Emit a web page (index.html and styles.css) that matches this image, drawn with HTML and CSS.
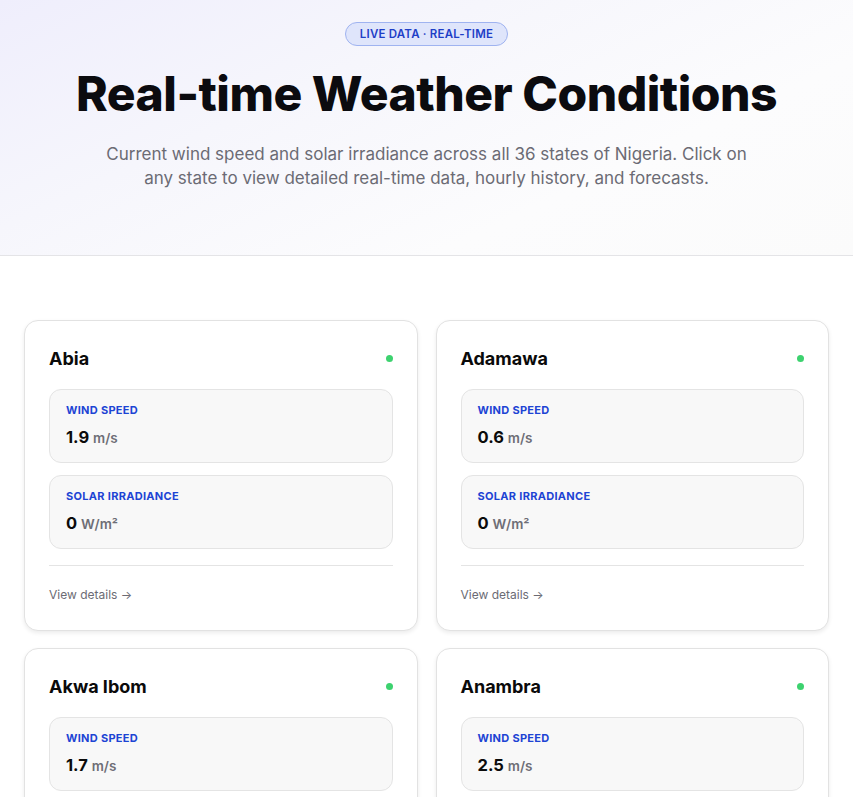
FILE: index.html
```html
<!DOCTYPE html>
<html lang="en">
<head>
<meta charset="utf-8">
<title>Real-time Weather Conditions</title>
<link rel="stylesheet" href="styles.css">
</head>
<body>
<header class="hero">
  <span class="badge">LIVE DATA · REAL-TIME</span>
  <h1 class="title">Real-time Weather Conditions</h1>
  <p class="lead">Current wind speed and solar irradiance across all 36 states of Nigeria. Click on any state to view detailed real-time data, hourly history, and forecasts.</p>
</header>
<main class="grid">
  <article class="card">
    <div class="card-head"><h2 class="state">Abia</h2><span class="dot"></span></div>
    <div class="metric"><div class="label">WIND SPEED</div><div class="value">1.9 <span class="unit">m/s</span></div></div>
    <div class="metric"><div class="label">SOLAR IRRADIANCE</div><div class="value">0 <span class="unit">W/m²</span></div></div>
    <div class="foot">View details →</div>
  </article>
  <article class="card">
    <div class="card-head"><h2 class="state">Adamawa</h2><span class="dot"></span></div>
    <div class="metric"><div class="label">WIND SPEED</div><div class="value">0.6 <span class="unit">m/s</span></div></div>
    <div class="metric"><div class="label">SOLAR IRRADIANCE</div><div class="value">0 <span class="unit">W/m²</span></div></div>
    <div class="foot">View details →</div>
  </article>
  <article class="card">
    <div class="card-head"><h2 class="state">Akwa Ibom</h2><span class="dot"></span></div>
    <div class="metric"><div class="label">WIND SPEED</div><div class="value">1.7 <span class="unit">m/s</span></div></div>
    <div class="metric"><div class="label">SOLAR IRRADIANCE</div><div class="value">0 <span class="unit">W/m²</span></div></div>
    <div class="foot">View details →</div>
  </article>
  <article class="card">
    <div class="card-head"><h2 class="state">Anambra</h2><span class="dot"></span></div>
    <div class="metric"><div class="label">WIND SPEED</div><div class="value">2.5 <span class="unit">m/s</span></div></div>
    <div class="metric"><div class="label">SOLAR IRRADIANCE</div><div class="value">0 <span class="unit">W/m²</span></div></div>
    <div class="foot">View details →</div>
  </article>
</main>
</body>
</html>
```
FILE: styles.css
```css
* { box-sizing: border-box; }
body {
  margin: 0;
  font-family: Inter, "Noto Sans", sans-serif;
  color: #0a0a0a;
  background: #ffffff;
}
.hero {
  display: flex;
  flex-direction: column;
  align-items: center;
  padding: 22px 24px 0;
  height: 256px;
  border-bottom: 1px solid #e4e4e7;
  background: linear-gradient(155deg, #efeefc 0%, #f6f6fc 35%, #fcfcfd 70%, #fbfbfb 100%);
  text-align: center;
}
.badge {
  display: inline-block;
  height: 24px;
  line-height: 22px;
  padding: 0 14px;
  border: 1px solid #9fb3f0;
  border-radius: 12px;
  background: #dfe5fb;
  color: #1e3fc7;
  font-size: 11.5px;
  font-weight: 600;
  letter-spacing: 0.2px;
}
.title {
  margin: 18px 0 0;
  font-size: 48px;
  line-height: 60px;
  font-weight: 800;
  letter-spacing: -0.5px;
  color: #0b0b0f;
}
.lead {
  margin: 18px 0 0;
  max-width: 655px;
  font-size: 17px;
  line-height: 24px;
  color: #6b6b74;
}
.grid {
  display: grid;
  grid-template-columns: 1fr 1fr;
  gap: 17px 18px;
  padding: 64px 24px 24px;
}
.card {
  border: 1px solid #e2e2e2;
  border-radius: 14px;
  background: #fff;
  box-shadow: 0 2px 4px rgba(0,0,0,0.08);
  padding: 23px 24px 26px;
}
.card-head {
  display: flex;
  align-items: center;
  justify-content: space-between;
  height: 28px;
  margin-bottom: 17px;
}
.state {
  margin: 0;
  font-size: 18px;
  font-weight: 700;
}
.dot {
  width: 7px;
  height: 7px;
  border-radius: 50%;
  background: #3dd26f;
}
.metric {
  height: 74px;
  border: 1px solid #e4e4e4;
  border-radius: 12px;
  background: #f8f8f8;
  padding: 12px 16px;
  margin-bottom: 12px;
}
.label {
  font-size: 11px;
  line-height: 16px;
  font-weight: 700;
  color: #1d44d4;
  letter-spacing: 0.3px;
}
.value {
  margin-top: 9px;
  font-size: 16.5px;
  line-height: 20px;
  font-weight: 700;
  color: #0b0b0b;
}
.unit {
  font-size: 13.5px;
  font-weight: 600;
  color: #6e6e76;
}
.foot {
  margin-top: 16px;
  border-top: 1px solid #e4e4e4;
  padding-top: 20px;
  font-size: 12px;
  line-height: 18px;
  color: #6b6b74;
}
```
